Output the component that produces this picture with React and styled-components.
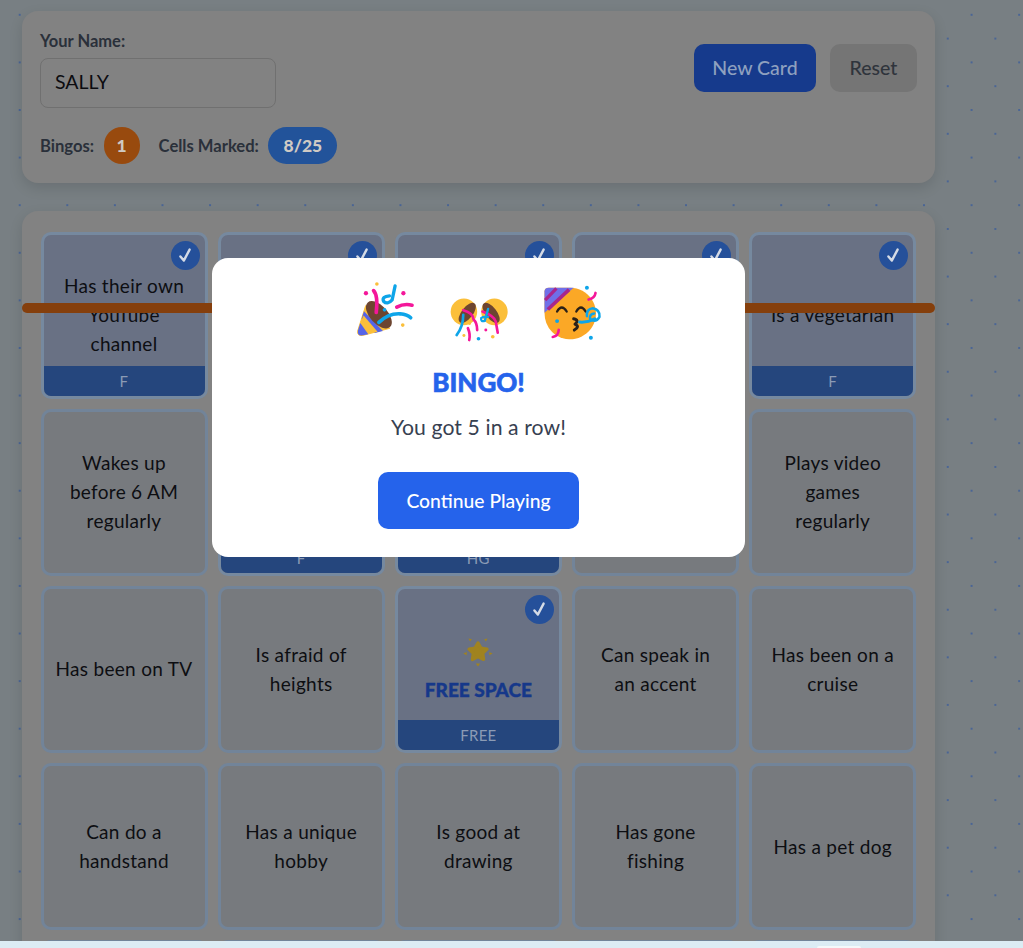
import React from "react";
import styled, { createGlobalStyle } from "styled-components";

const FONT = `"Lato", "Noto Sans", sans-serif`;

const Global = createGlobalStyle`
  html, body { margin: 0; padding: 0; height: 948px; overflow: hidden; }
  body { background: #dcecf4; font-family: ${FONT}; }
  #root { height: 948px; overflow: hidden; }
  * { box-sizing: border-box; }
`;

const Page = styled.div`
  position: relative;
  height: 948px;
  overflow: hidden;
  background-color: #dcecf4;
`;

const Backdrop = styled.div`
  height: 941px;
  overflow: hidden;
  padding: 11px 88px 0 22px;
  background-color: #787f83;
  background-image:
    radial-gradient(circle at 50% 50%, #4a6595 0.9px, transparent 1.2px),
    radial-gradient(circle at 50% 50%, #4a6595 0.9px, transparent 1.2px);
  background-size: 47.6px 47.6px;
  background-position: -4.1px -9px, 19.7px 14.8px;
`;

const Panel = styled.section`
  background: #828282;
  border-radius: 16px;
  box-shadow: 0 5px 14px rgba(0, 0, 0, 0.12);
`;

const Header = styled(Panel)`
  height: 172px;
  padding: 21px 18px 19px 18px;
  display: flex;
  flex-direction: column;
  margin-bottom: 28px;
`;

const TopRow = styled.div`
  display: flex;
  justify-content: space-between;
  align-items: flex-start;
`;

const NameField = styled.div`
  display: flex;
  flex-direction: column;
  gap: 8px;
`;

const Label = styled.label`
  font-size: 16.5px;
  font-weight: 700;
  line-height: 18px;
  color: #2a303a;
`;

const NameInput = styled.div`
  width: 236px;
  height: 50px;
  border: 1.5px solid #707070;
  border-radius: 8px;
  padding: 0 14px 4px;
  display: flex;
  align-items: center;
  font-size: 19.5px;
  color: #0c0c10;
`;

const Buttons = styled.div`
  display: flex;
  gap: 14px;
  margin-top: 12px;
`;

const Btn = styled.button`
  height: 48px;
  padding: 0 0 2px;
  border: none;
  border-radius: 10px;
  font-family: ${FONT};
  font-size: 19.5px;
  font-weight: 500;
  width: ${(p) => (p.$primary ? "122px" : "87px")};
  background: ${(p) => (p.$primary ? "#163a8c" : "#757575")};
  color: ${(p) => (p.$primary ? "#8ea0bf" : "#2f343c")};
`;

const Stats = styled.div`
  display: flex;
  align-items: center;
  margin-top: 19px;
`;

const StatLabel = styled.span`
  font-size: 16.6px;
  font-weight: 700;
  color: #2a303a;
  margin-right: 9.5px;
`;

const Badge = styled.span`
  display: flex;
  align-items: center;
  justify-content: center;
  height: 37px;
  border-radius: 19px;
  font-size: 17.5px;
  font-weight: 900;
  color: #cfcac4;
  width: ${(p) => (p.$wide ? "69px" : "36px")};
  background: ${(p) => (p.$wide ? "#22539a" : "#984a0e")};
  margin-right: ${(p) => (p.$wide ? "0" : "19px")};
`;

const Board = styled(Panel)`
  position: relative;
  padding: 20.5px 19px 30px 18.5px;
  border-bottom-left-radius: 0;
  border-bottom-right-radius: 0;
`;

const Grid = styled.div`
  display: grid;
  grid-template-columns: repeat(5, 167px);
  grid-auto-rows: 167px;
  gap: 10.2px;
`;

const Cell = styled.div`
  position: relative;
  overflow: hidden;
  display: flex;
  align-items: center;
  justify-content: center;
  border: 3px solid ${(p) => (p.$marked ? "#76899f" : "#728499")};
  border-radius: 10px;
  background: ${(p) => (p.$marked ? "#697184" : "#777a7e")};
`;

const CellText = styled.div`
  text-align: center;
  font-size: 19px;
  line-height: 29px;
  letter-spacing: 0.3px;
  color: #0d0e12;
  margin-top: -1px;
`;

const Line = styled.div`
  white-space: nowrap;
`;

const Tag = styled.div`
  position: absolute;
  left: 0;
  right: 0;
  bottom: 0;
  height: 30px;
  background: #25467d;
  color: #8b9bb5;
  font-size: 15px;
  display: flex;
  align-items: center;
  justify-content: center;
  letter-spacing: 0.3px;
`;

const Check = styled.span`
  position: absolute;
  top: 6px;
  right: 5px;
  width: 29px;
  height: 29px;
  border-radius: 50%;
  background: #25509a;
  display: flex;
  align-items: center;
  justify-content: center;
`;

const FreeBlock = styled.div`
  display: flex;
  flex-direction: column;
  align-items: center;
  gap: 12px;
`;

const FreeTitle = styled.div`
  font-size: 19px;
  font-weight: 900;
  color: #16388a;
  line-height: 22px;
  white-space: nowrap;
  -webkit-text-stroke: 0.4px #16388a;
`;

const Strike = styled.div`
  position: absolute;
  z-index: 2;
  left: 0;
  right: 0;
  top: 92px;
  height: 10px;
  border-radius: 5px;
  background: #853f0c;
`;

const Modal = styled.div`
  position: absolute;
  z-index: 3;
  left: 212px;
  top: 258px;
  width: 533px;
  height: 299px;
  background: #fff;
  border-radius: 16px;
  display: flex;
  flex-direction: column;
  align-items: center;
  padding-top: 22px;
`;

const EmojiRow = styled.div`
  display: flex;
  align-items: flex-start;
  justify-content: center;
  gap: 31px;
  height: 64px;
`;

const EmojiSvg = styled.svg`
  display: block;
  flex: none;
  margin-top: ${(p) => p.$drop || 0}px;
  fill: none;
  stroke-linecap: round;
  stroke-linejoin: round;
`;

const BingoTitle = styled.h2`
  margin: 21px 0 0;
  font-size: 26px;
  font-weight: 900;
  line-height: 34px;
  color: #2563eb;
  -webkit-text-stroke: 0.6px #2563eb;
`;

const ModalText = styled.p`
  margin: 14px 0 0;
  font-size: 21.2px;
  line-height: 28px;
  letter-spacing: 0.1px;
  color: #374151;
`;

const Continue = styled.button`
  margin-top: 31px;
  width: 201px;
  height: 57px;
  border: none;
  border-radius: 10px;
  background: #2563eb;
  color: #fff;
  font-family: ${FONT};
  font-size: 19.3px;
  font-weight: 500;
`;

const Sliver = styled.div`
  position: absolute;
  left: 817px;
  top: 946px;
  width: 44px;
  height: 4px;
  border-radius: 3px;
  background: #f4f8fa;
`;

const CheckMark = () => (
  <svg width="17" height="17" viewBox="0 0 17 17" fill="none">
    <path d="M3.4 9.4 L6.8 13.6 L12.6 2.6" stroke="#d5dbe6" strokeWidth="2.4" strokeLinecap="round" strokeLinejoin="round" />
  </svg>
);

const Star = () => (
  <svg width="30" height="30" viewBox="0 0 30 30">
    <path d="M15 6l2.9 5.2 6 .9-4.3 4.3 1 6-5.6-2.8-5.6 2.8 1-6-4.3-4.3 6-.9z" fill="#a08320" stroke="#a08320" strokeWidth="3.4" strokeLinejoin="round" />
    <path d="M5.5 1.5l3.4.7-1.8 2.4zM24.5 1.5l-3.4.7 1.8 2.4zM.4 16.5l3.4-1.4-.2 3.2zM29.6 16.5l-3.4-1.4.2 3.2zM15 29.5l-2.2-3h4.4z" fill="#a08320" />
  </svg>
);

const PINK = "#f4179a";
const BLUE = "#0ea5e9";
const GOLD = "#fbbf3a";
const BROWN = "#6d4530";

const Popper = () => (
  <EmojiSvg width="62" height="58" viewBox="45 30 185 175">
    <path d="M76 108 L52 184 Q50 200 68 197 L148 176Z" fill={GOLD} stroke={GOLD} strokeWidth="3" />
    <path d="M71 124 L128 184 L104 190 L64 148Z" fill="#5564e8" />
    <path d="M60 160 L84 194 L68 197 Q50 200 53 182Z" fill="#5564e8" />
    <path d="M70 137 L112 186 L98 190 L64 150Z" fill={GOLD} />
    <ellipse cx="116" cy="135" rx="27" ry="50" transform="rotate(-42 116 135)" fill={BROWN} />
    <path d="M100 62 Q114 76 108 128" stroke={PINK} strokeWidth="11" />
    <path d="M165 48 L156 90 Q142 106 130 94 Q124 80 148 78" stroke={BLUE} strokeWidth="10" />
    <path d="M170 112 Q192 100 216 106" stroke={PINK} strokeWidth="11" />
    <path d="M116 158 Q145 130 180 132 Q202 134 212 144" stroke={BLUE} strokeWidth="11" />
    <circle cx="110" cy="42" r="5.5" fill={GOLD} />
    <circle cx="77" cy="70" r="6.5" fill={PINK} />
    <circle cx="190" cy="70" r="6.5" fill={PINK} />
    <circle cx="188" cy="166" r="5.5" fill={GOLD} />
    <circle cx="133" cy="120" r="5.5" fill={BLUE} />
  </EmojiSvg>
);

const Poppers = () => (
  <EmojiSvg $drop={16} width="63" height="47" viewBox="320 80 190 140">
    <circle cx="368" cy="127" r="40" fill={GOLD} />
    <circle cx="460" cy="127" r="40" fill={GOLD} />
    <ellipse cx="378" cy="130" rx="17" ry="36" transform="rotate(38 378 130)" fill={BROWN} />
    <ellipse cx="450" cy="130" rx="17" ry="36" transform="rotate(-38 450 130)" fill={BROWN} />
    <path d="M366 122 Q396 130 397 150 Q408 160 408 182" stroke={PINK} strokeWidth="8" />
    <path d="M366 136 Q366 172 346 197" stroke={BLUE} strokeWidth="8" />
    <path d="M380 176 Q388 195 384 212" stroke={PINK} strokeWidth="8" />
    <path d="M424 126 Q460 140 464 156 L470 190" stroke={PINK} strokeWidth="8" />
    <path d="M441 118 L431 154 Q418 158 420 146 Q426 140 441 142" stroke={BLUE} strokeWidth="7" />
    <circle cx="385" cy="162" r="4.5" fill={GOLD} />
    <circle cx="368" cy="198" r="4.5" fill={GOLD} />
    <circle cx="434" cy="182" r="4.5" fill={PINK} />
    <circle cx="412" cy="208" r="5.5" fill={BLUE} />
    <circle cx="455" cy="202" r="5.5" fill={GOLD} />
  </EmojiSvg>
);

const Blower = () => (
  <EmojiSvg $drop={3} width="60" height="58" viewBox="605 40 180 175">
    <path d="M625 54 H690 A78 78 0 1 1 635 188 Q612 165 612 130 V66 Q612 54 625 54Z" fill="#fba826" />
    <path d="M625 54 H700 L612 130 V66 Q612 54 625 54Z" fill="#6f6fe8" />
    <path d="M614 92 L648 56" stroke="#a8268c" strokeWidth="10" strokeLinecap="butt" />
    <path d="M622 120 L686 60" stroke="#a8268c" strokeWidth="11" strokeLinecap="butt" />
    <path d="M650 126 Q664 102 679 126 M708 126 Q722 102 736 126" stroke="#2b2118" strokeWidth="7" />
    <path d="M700 148 Q718 152 704 164 Q720 172 702 182" stroke="#2b2118" strokeWidth="9" />
    <path d="M718 158 Q742 160 764 148" stroke={BLUE} strokeWidth="9" />
    <path d="M740 140 Q738 118 758 116 Q780 120 778 142 Q768 160 750 150 Q746 134 762 132" stroke={BLUE} strokeWidth="7.5" />
    <path d="M745 90 Q764 86 766 70" stroke={PINK} strokeWidth="8" />
    <path d="M637 203 Q654 200 655 181" stroke={PINK} strokeWidth="8" />
    <circle cx="740" cy="54" r="6" fill={BLUE} />
    <circle cx="650" cy="155" r="6" fill={BLUE} />
    <circle cx="752" cy="205" r="6" fill={BLUE} />
  </EmojiSvg>
);

const cells = [
  { l: ["Has their own", "YouTube", "channel"], tag: "F", m: true },
  { tag: " ", m: true },
  { tag: " ", m: true },
  { tag: " ", m: true },
  { l: ["Is a vegetarian"], tag: "F", m: true },
  { l: ["Wakes up", "before 6 AM", "regularly"] },
  { tag: "F", m: true },
  { tag: "HG", m: true },
  {},
  { l: ["Plays video", "games", "regularly"] },
  { l: ["Has been on TV"] },
  { l: ["Is afraid of", "heights"] },
  { free: true, tag: "FREE", m: true },
  { l: ["Can speak in", "an accent"] },
  { l: ["Has been on a", "cruise"] },
  { l: ["Can do a", "handstand"] },
  { l: ["Has a unique", "hobby"] },
  { l: ["Is good at", "drawing"] },
  { l: ["Has gone", "fishing"] },
  { l: ["Has a pet dog"] },
  {},
  {},
  {},
  {},
  {},
];

export default function App() {
  return (
    <>
      <Global />
      <Page>
        <Backdrop>
          <Header>
            <TopRow>
              <NameField>
                <Label>Your Name:</Label>
                <NameInput>SALLY</NameInput>
              </NameField>
              <Buttons>
                <Btn $primary>New Card</Btn>
                <Btn>Reset</Btn>
              </Buttons>
            </TopRow>
            <Stats>
              <StatLabel>Bingos:</StatLabel>
              <Badge>1</Badge>
              <StatLabel>Cells Marked:</StatLabel>
              <Badge $wide>8/25</Badge>
            </Stats>
          </Header>
          <Board>
            <Strike />
            <Grid>
              {cells.map((c, i) => (
                <Cell key={i} $marked={c.m}>
                  {c.free ? (
                    <FreeBlock>
                      <Star />
                      <FreeTitle>FREE SPACE</FreeTitle>
                    </FreeBlock>
                  ) : (
                    <CellText>
                      {(c.l || []).map((line) => (
                        <Line key={line}>{line}</Line>
                      ))}
                    </CellText>
                  )}
                  {c.tag && <Tag>{c.tag}</Tag>}
                  {c.m && (
                    <Check>
                      <CheckMark />
                    </Check>
                  )}
                </Cell>
              ))}
            </Grid>
          </Board>
        </Backdrop>
        <Sliver />
        <Modal>
          <EmojiRow>
            <Popper />
            <Poppers />
            <Blower />
          </EmojiRow>
          <BingoTitle>BINGO!</BingoTitle>
          <ModalText>You got 5 in a row!</ModalText>
          <Continue>Continue Playing</Continue>
        </Modal>
      </Page>
    </>
  );
}
